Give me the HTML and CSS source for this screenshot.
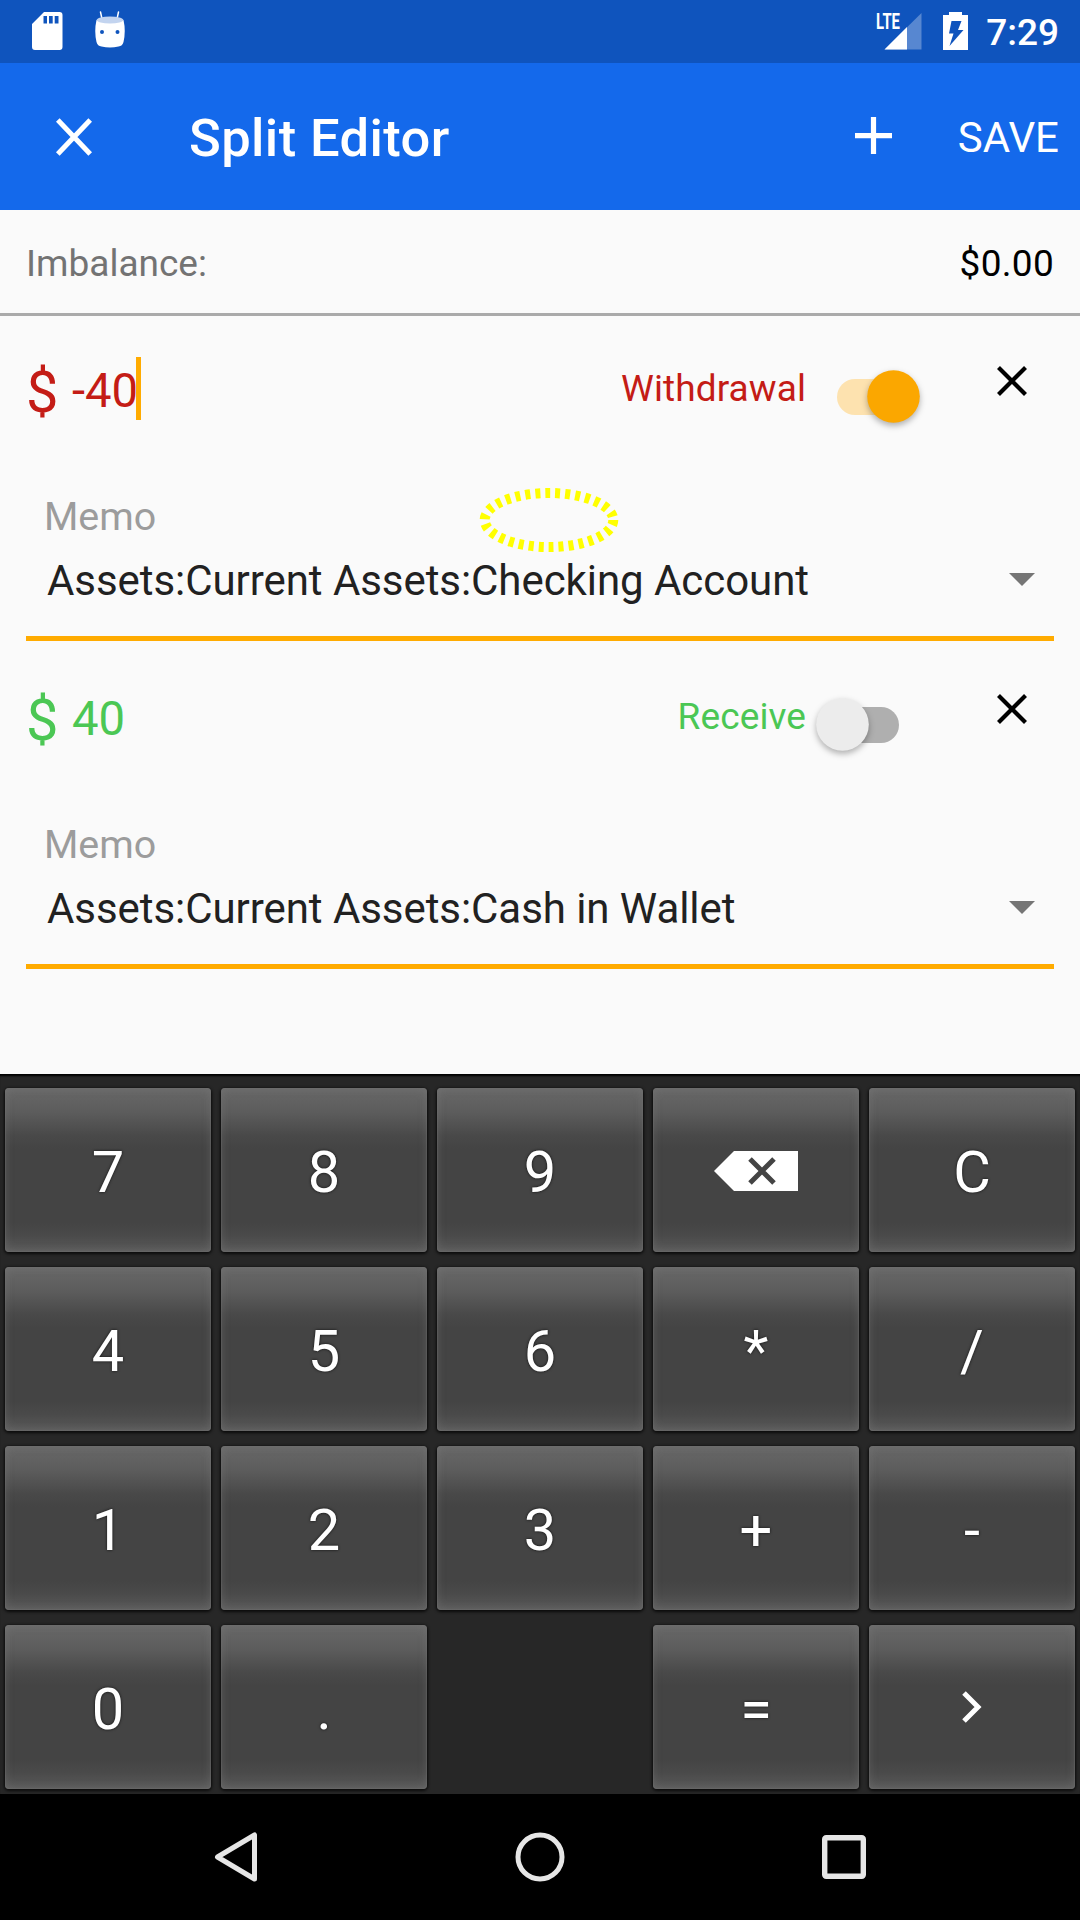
FILE: index.html
```html
<!DOCTYPE html>
<html lang="en">
<head>
<meta charset="utf-8">
<title>Split Editor</title>
<link rel="stylesheet" href="styles.css">
</head>
<body>
<div class="screen">
  <div class="status-bar">
    <svg class="status-sd" width="31" height="38" viewBox="0 0 31 38"><path fill="#fff" fill-rule="evenodd" d="M12 0H27.500A3 3 0 0 1 30.500 3V35A3 3 0 0 1 27.500 38H3A3 3 0 0 1 0 35V12ZM11.500 4V11.500H15V4ZM17 4V11.500H20.700V4ZM22.700 4V11.500H26.500V4Z"/></svg>
    <svg class="status-droid" width="32" height="38" viewBox="0 0 32 38">
      <path d="M6.500 1 8 8M24.500 1 23 8" stroke="#fff" stroke-width="1.500" stroke-linecap="round"/>
      <path fill="#fff" fill-rule="evenodd" d="M2.500 9Q16 15 29.500 9Q32 20 29.500 31Q28.500 35 24.500 35.500Q16 37.500 7.500 35.500Q3.500 35 2.500 31Q0 20 2.500 9ZM6 21A2 2 0 1 0 10 21A2 2 0 1 0 6 21ZM21.500 21A2 2 0 1 0 25.500 21A2 2 0 1 0 21.500 21Z"/>
      <ellipse cx="16" cy="9" rx="13.300" ry="3.500" fill="#c3d4ef"/>
    </svg>
    <span class="spacer"></span>
    <svg class="status-signal" width="46" height="37" viewBox="0 0 46 37">
      <path d="M45.500 0V36.500H8.500Z" fill="#fff" fill-opacity=".3"/>
      <path d="M31 14V36.500H8.500Z" fill="#fff"/>
      <text class="lte" x="0" y="16.300" textLength="24" lengthAdjust="spacingAndGlyphs">LTE</text>
    </svg>
    <svg class="status-battery" width="25" height="38" viewBox="0 0 25 38"><path fill="#fff" fill-rule="evenodd" d="M6 0H19V3H25V38H0V3H6ZM8.500 9 6 21.500H10.500L6.500 34 20.500 18H15L18.500 9Z"/></svg>
    <span class="clock">7:29</span>
  </div>

  <div class="toolbar">
    <svg class="close" width="36" height="38" viewBox="0 0 36 38"><path d="M1.800 2 34.200 36M34.200 2 1.800 36" stroke="#fff" stroke-width="5"/></svg>
    <h1 class="title">Split Editor</h1>
    <svg class="add" width="37" height="37" viewBox="0 0 37 37"><path d="M18.500 0V37M0 18.700H37" stroke="#fff" stroke-width="5.200"/></svg>
    <span class="save">SAVE</span>
  </div>

  <div class="imbalance"><span class="imbalance-label">Imbalance:</span><span class="imbalance-value">$0.00</span></div>

  <div class="splits">
    <div class="split withdrawal">
      <div class="split-main">
        <span class="currency">$</span>
        <span class="amount">-40</span><span class="cursor"></span>
        <span class="type">Withdrawal</span>
        <svg class="switch" width="114" height="70" viewBox="0 0 114 70">
          <rect x="23" y="18" width="62" height="36" rx="18" fill="#fde2af"/>
          <circle class="thumb" cx="79.500" cy="35.500" r="26.300" fill="#fba700"/>
        </svg>
        <svg class="remove" width="30" height="30" viewBox="0 0 30 30"><path d="M1.500 1.500 28.500 28.500M28.500 1.500 1.500 28.500" stroke="#000" stroke-width="4.200"/></svg>
      </div>
      <div class="memo">Memo</div>
      <div class="account"><span>Assets:Current Assets:Checking Account</span><svg width="26" height="13" viewBox="0 0 26 13"><path d="M0 0H26L13 13Z" fill="#757575"/></svg></div>
      <svg class="marker" width="140" height="66" viewBox="0 0 140 66"><ellipse cx="70" cy="33" rx="64.300" ry="27" fill="none" stroke="#ff0" stroke-width="10" stroke-dasharray="5 5"/></svg>
    </div>
    <div class="split receive">
      <div class="split-main">
        <span class="currency">$</span>
        <span class="amount">40</span>
        <span class="type">Receive</span>
        <svg class="switch" width="114" height="70" viewBox="0 0 114 70">
          <rect x="23" y="18" width="62" height="36" rx="18" fill="#afafaf"/>
          <circle class="thumb" cx="28.500" cy="35.500" r="26.300" fill="#ececec"/>
        </svg>
        <svg class="remove" width="30" height="30" viewBox="0 0 30 30"><path d="M1.500 1.500 28.500 28.500M28.500 1.500 1.500 28.500" stroke="#000" stroke-width="4.200"/></svg>
      </div>
      <div class="memo">Memo</div>
      <div class="account"><span>Assets:Current Assets:Cash in Wallet</span><svg width="26" height="13" viewBox="0 0 26 13"><path d="M0 0H26L13 13Z" fill="#757575"/></svg></div>
    </div>
  </div>

  <div class="keyboard">
    <div class="key">7</div><div class="key">8</div><div class="key">9</div>
    <div class="key icon-key"><svg class="backspace" width="84" height="40" viewBox="0 0 84 40"><path d="M0 20 20 0H84V40H20Z" fill="#fff"/><path d="M36 8 60 32M60 8 36 32" stroke="#444" stroke-width="5"/></svg></div>
    <div class="key">C</div>
    <div class="key">4</div><div class="key">5</div><div class="key">6</div><div class="key">*</div><div class="key">/</div>
    <div class="key">1</div><div class="key">2</div><div class="key">3</div><div class="key">+</div><div class="key">-</div>
    <div class="key">0</div><div class="key">.</div><div></div><div class="key">=</div>
    <div class="key icon-key"><svg width="20" height="32" viewBox="0 0 20 32"><path d="M2 2 16 16 2 30" fill="none" stroke="#fff" stroke-width="5"/></svg></div>
  </div>

  <div class="nav-bar">
    <svg width="52" height="52" viewBox="0 0 52 52"><path d="M44.500 4V48L7.500 26Z" fill="none" stroke="#e6e6e6" stroke-width="5" stroke-linejoin="round"/></svg>
    <svg width="52" height="52" viewBox="0 0 52 52"><circle cx="26" cy="26" r="22" fill="none" stroke="#e6e6e6" stroke-width="5"/></svg>
    <svg width="52" height="52" viewBox="0 0 52 52"><rect x="6.700" y="6.700" width="38.600" height="38.600" rx="1.500" fill="none" stroke="#e6e6e6" stroke-width="5.400"/></svg>
  </div>
</div>
</body>
</html>
```
FILE: styles.css
```css
* { box-sizing: border-box; }
body { margin: 0; font-family: Roboto, "Liberation Sans", sans-serif; color: #000; }
svg { display: block; flex: none; overflow: visible; }
.screen { width: 1080px; height: 1920px; display: flex; flex-direction: column; background: #fafafa; overflow: hidden; }

.status-bar { height: 63px; flex: none; display: flex; align-items: flex-start; padding: 0 21px 0 32px; background: #0f54bd; }
.status-sd { margin-top: 12px; }
.status-droid { margin: 11px 0 0 31px; }
.spacer { flex: 1; }
.status-signal { margin-top: 13px; }
.status-battery { margin: 12px 18px 0 21px; }
.lte { font-size: 22.5px; font-weight: 700; fill: #fff; }
.clock { font-size: 37px; font-weight: 500; line-height: 66px; color: #fff; }

.toolbar { height: 147px; flex: none; display: flex; align-items: center; padding: 0 21px 0 56px; background: #1469eb; color: #fff; }
.title { margin: 0 auto 0 97px; font-size: 52.5px; font-weight: 500; line-height: 62px; padding-top: 3px; letter-spacing: .4px; }
.add { margin-right: 66px; margin-bottom: 2px; }
.save { font-size: 42px; line-height: 50px; padding-top: 3px; }

.imbalance { height: 106px; flex: none; display: flex; justify-content: space-between; align-items: center; padding: 5px 26px 0; border-bottom: 3px solid #aaa; font-size: 37px; line-height: 44px; }
.imbalance-label { color: #737373; }
.imbalance-value { letter-spacing: .3px; }

.splits { flex: 1; }
.split { position: relative; height: 328px; padding: 0 26px 3px; }
.split-main { display: flex; align-items: flex-start; height: 160px; }
.withdrawal .split-main { color: #c41c16; }
.receive .split-main { color: #4bc754; }
.currency { font-size: 57.75px; line-height: 66px; margin-top: 43px; width: 46px; }
.amount { font-size: 47.25px; line-height: 62px; margin-top: 44px; }
.cursor { width: 5px; height: 63px; margin: 41px 0 0 -2px; background: #ffab00; }
.type { margin: 51px 8px 0 auto; font-size: 37px; line-height: 44px; letter-spacing: .1px; }
.switch { margin-top: 45px; }
.thumb { filter: drop-shadow(0 3px 3px rgba(0, 0, 0, .3)); }
.remove { margin: 50px 27px 0 69px; }
.memo { padding-left: 18px; height: 81px; line-height: 81px; font-size: 39.375px; color: #9c9c9c; }
.account { display: flex; justify-content: space-between; align-items: flex-start; height: 84px; padding: 0 19px 0 21px; border-bottom: 5px solid #ffab00; font-size: 42px; line-height: 47px; letter-spacing: -.06px; color: #212121; }
.account svg { margin-top: 16px; }
.marker { position: absolute; left: 479px; top: 171px; }

.keyboard { height: 720px; flex: none; display: grid; grid-template-columns: repeat(5, 206px); grid-template-rows: repeat(4, 164px); gap: 15px 10px; padding: 14px 5px 5px; background: #272727; box-shadow: inset 0 3px 2px -1px #000; }
.key { display: flex; align-items: center; justify-content: center; padding-top: 3px; border-radius: 4px; color: #fff; font-size: 57.75px; text-shadow: 0 0 3px rgba(0, 0, 0, .8); background: linear-gradient(#686868 0%, #5c5c5c 15%, #494949 29%, #444 37%, #444 82%, #4a4a4a 90%, #5a5a5a 100%); box-shadow: inset 0 0 1px 1px rgba(110, 110, 110, .4), inset 0 0 8px rgba(140, 140, 140, .35), 0 1px 3px 1px rgba(0, 0, 0, .75); }
.icon-key { padding: 0; }
.backspace { margin-top: 2px; }

.nav-bar { flex: none; height: 126px; display: flex; justify-content: center; align-items: center; gap: 252px; background: #000; }
```
